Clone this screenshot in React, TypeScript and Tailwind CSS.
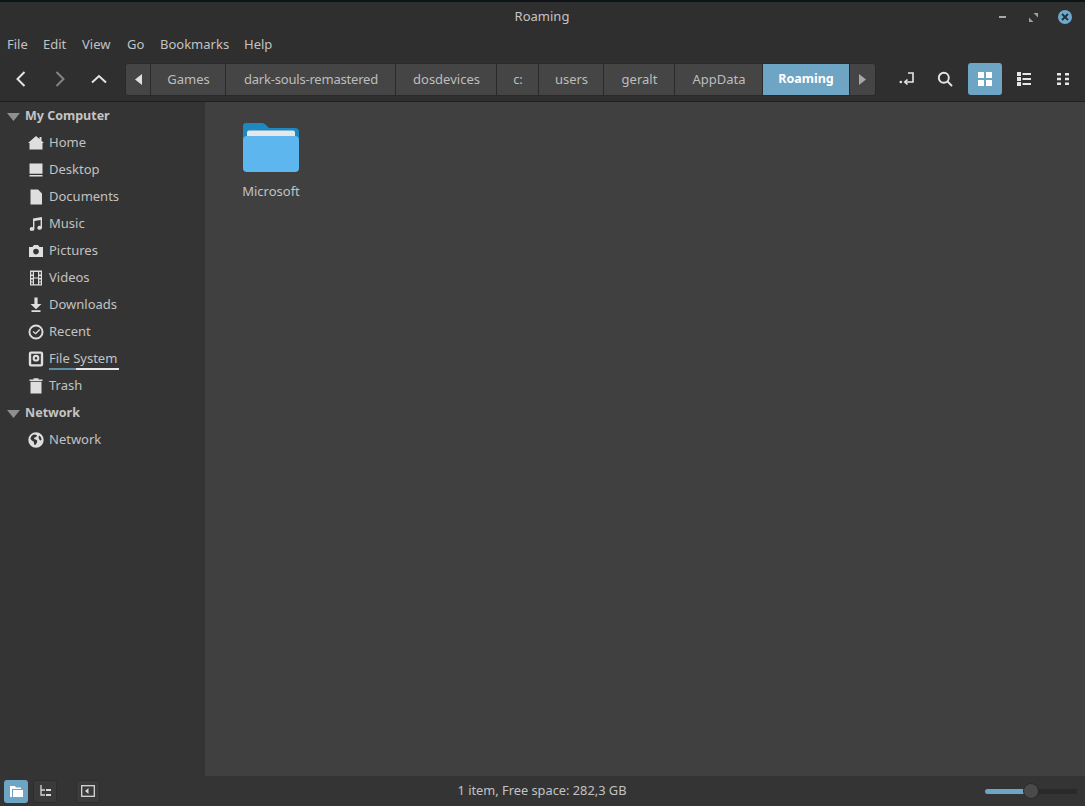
import React from 'react';

const F = "font-['Noto_Sans',sans-serif]";

const Icon: React.FC<{ children: React.ReactNode; size?: number; className?: string }> = ({ children, size = 16, className }) => (
  <svg width={size} height={size} viewBox="0 0 16 16" fill="currentColor" className={className}>
    {children}
  </svg>
);

const sidebarIcons: Record<string, React.ReactNode> = {
  Home: <path d="M8 1 11.500 4V2H13.500V5.800L16 8H14.500V14.500H1.500V8H0Z" />,
  Desktop: <path d="M1.500 1.500H14.500V11.800H1.500ZM1.500 13H14.500V14.500H1.500Z" />,
  Documents: <path d="M2.500 .5H10L14 4.500V15.500H2.500ZM10 .5V4.500H14L13.400 5.100H9.400V1Z" />,
  Music: <path d="M5 2.500 14 1V11.800A2.300 1.900 0 1 1 12.600 10V4L6.400 5V13A2.300 1.900 0 1 1 5 11.200Z" />,
  Pictures: (
    <path fillRule="evenodd" d="M1 4H4.500L6 2H10L11.500 4H15V14H1ZM8 5.800A2.800 2.800 0 1 0 8 11.400 2.800 2.800 0 0 0 8 5.800Z" />
  ),
  Videos: (
    <path fillRule="evenodd" d="M2 .5H14V15.500H2ZM3.200 2V4.500H4.800V2ZM3.200 6V8H4.800V6ZM3.200 9.500V11.500H4.800V9.500ZM3.200 12.500V14.300H4.800V12.500ZM11.200 2V4.500H12.800V2ZM11.200 6V8H12.800V6ZM11.200 9.500V11.500H12.800V9.500ZM11.200 12.500V14.300H12.800V12.500ZM6 2V7.400H10V2ZM6 8.600V14.300H10V8.600Z" />
  ),
  Downloads: <path d="M6.400 .5H9.600V7H13.500L8 12.300 2.500 7H6.400ZM3.500 13.300H12.500V15H3.500Z" />,
  Recent: (
    <path fillRule="evenodd" d="M8 .5A7.500 7.500 0 1 0 8 15.500 7.500 7.500 0 0 0 8 .5ZM8 2.400A5.600 5.600 0 1 1 8 13.600 5.600 5.600 0 0 1 8 2.400ZM11.200 5 7.600 8.700 5.400 7 4.600 8 7.700 10.600 12.200 5.900Z" />
  ),
  'File System': (
    <path fillRule="evenodd" d="M3 .5H13A2.200 2.200 0 0 1 15.200 2.700V13.300A2.200 2.200 0 0 1 13 15.500H3A2.200 2.200 0 0 1 .8 13.300V2.700A2.200 2.200 0 0 1 3 .5ZM3.200 2.800V13.200H12.800V2.800ZM8 3.800A3.400 3.400 0 1 1 8 10.600 3.400 3.400 0 0 1 8 3.800ZM8 5.900A1.300 1.300 0 1 0 8 8.500 1.300 1.300 0 0 0 8 5.900Z" />
  ),
  Trash: <path d="M5.500 .3H10.500V1.500H14.500V3H1.500V1.500H5.500ZM2.500 3.800H13.500V15.500H2.500Z" />,
  Network: (
    <path fillRule="evenodd" d="M8 .3A7.700 7.700 0 1 0 8 15.700 7.700 7.700 0 0 0 8 .3ZM5 2.800 7.400 2.400 9 3.600 8.200 5 6.400 5.400 6 7 7.600 7.400 9.200 8.600 9 10.600 7.400 13 6.200 12.400 5.800 9.800 3.800 8.600 2.400 6.800 3.200 4.400ZM11 3.400 13 5.200 13.600 8 12.400 8.400 11 7 10.600 5Z" />
  ),
};

const Place: React.FC<{ name: string; underline?: boolean }> = ({ name, underline }) => (
  <div className="flex h-[27px] items-center pl-[28px]">
    <Icon className="text-[#dedede]">{sidebarIcons[name]}</Icon>
    <span className="relative ml-[5px] text-[13px] text-[#c2c2c2]">
      {name}
      {underline && (
        <span className="absolute -bottom-[2px] left-0 flex h-[2px] w-[70px]">
          <span className="w-[27px] bg-[#5b8fa8]" />
          <span className="flex-1 bg-[#e8e8e8]" />
        </span>
      )}
    </span>
  </div>
);

const Heading: React.FC<{ name: string }> = ({ name }) => (
  <div className="flex h-[27px] items-center pl-[7px] pt-[2px]">
    <svg width="13" height="8" viewBox="0 0 13 8" className="text-[#8f8f8f]" fill="currentColor">
      <path d="M0 0H13L6.500 8Z" />
    </svg>
    <span className="ml-[5px] text-[12.5px] font-bold text-[#c4c4c4]">{name}</span>
  </div>
);

const crumbs: [string, string][] = [
  ['Games', 'w-[75px]'],
  ['dark-souls-remastered', 'w-[170px] tracking-[-0.2px]'],
  ['dosdevices', 'w-[101px]'],
  ['c:', 'w-[42px]'],
  ['users', 'w-[65px]'],
  ['geralt', 'w-[71px]'],
  ['AppData', 'w-[88px]'],
];

const StatusButton: React.FC<{ active?: boolean; children: React.ReactNode }> = ({ active, children }) => (
  <div
    className={`flex h-[23px] w-[24px] items-center justify-center rounded-[3px] ${
      active ? 'bg-[#6ea4c4] text-white' : 'border border-[#2e2e2e] bg-[#3a3a3a] text-[#d8d8d8]'
    }`}
  >
    {children}
  </div>
);

export default function App() {
  return (
    <div className={`${F} flex h-[806px] w-[1085px] flex-col overflow-hidden bg-[#2f2f2f]`}>
      {/* wallpaper sliver above the window */}
      <div className="h-[2px] bg-[#0c1418]" />

      {/* Title bar */}
      <div className="flex h-[30px] items-center">
        <div className="w-[998px] pl-[458px]">
          <div className="w-[168px] text-center text-[13px] text-[#c4c4c4]">Roaming</div>
        </div>
        <div className="flex items-center pl-[1px]">
          <div className="h-[2px] w-[7px] bg-[#a8a8a8]" />
          <svg width="9" height="9" viewBox="0 0 9 9" fill="#a0a0a0" className="ml-[23px]">
            <path d="M4.500 0H9V4.500ZM4.500 9H0V4.500Z" />
          </svg>
          <div className="ml-[20px] flex h-[14px] w-[14px] items-center justify-center rounded-full bg-[#6ea8cb]">
            <svg width="8" height="8" viewBox="0 0 8 8" stroke="#1f2f3a" strokeWidth="1.800">
              <path d="M1 1 7 7M7 1 1 7" />
            </svg>
          </div>
        </div>
      </div>

      {/* Menu bar */}
      <div className="flex h-[24px] items-center pl-[7px] pt-[2px] text-[13px] text-[#c2c2c2]">
        <span className="w-[36px]">File</span>
        <span className="w-[39px]">Edit</span>
        <span className="w-[45px]">View</span>
        <span className="w-[33px]">Go</span>
        <span className="w-[84px]">Bookmarks</span>
        <span>Help</span>
      </div>

      {/* Toolbar */}
      <div className="flex h-[46px] items-center border-b border-[#1e1e1e] pt-[1px]">
        <div className="flex w-[125px] items-center pl-[14px]">
          <svg width="14" height="16" viewBox="0 0 14 16" fill="none" stroke="#e4e4e4" strokeWidth="2">
            <path d="M10.500 1 3.500 8 10.500 15" />
          </svg>
          <svg width="14" height="16" viewBox="0 0 14 16" fill="none" stroke="#858585" strokeWidth="2" className="ml-[25px]">
            <path d="M3.500 1 10.500 8 3.500 15" />
          </svg>
          <svg width="16" height="14" viewBox="0 0 16 14" fill="none" stroke="#e4e4e4" strokeWidth="2" className="ml-[24px]">
            <path d="M1 10.500 8 4 15 10.500" />
          </svg>
        </div>

        {/* Breadcrumb path */}
        <div className="flex h-[33px] w-[751px] overflow-hidden rounded-[3px] border border-[#2a2a2a] bg-[#454545] text-[13px] text-[#bdbdbd]">
          <div className="flex w-[25px] items-center justify-center border-r border-[#2a2a2a]">
            <svg width="7" height="11" viewBox="0 0 7 11" fill="#e0e0e0">
              <path d="M7 0V11L0 5.500Z" />
            </svg>
          </div>
          {crumbs.map(([name, width]) => (
            <div key={name} className={`flex items-center justify-center border-r border-[#2a2a2a] pl-[1px] pt-[1px] ${width}`}>
              {name}
            </div>
          ))}
          <div className="flex w-[86px] items-center justify-center bg-[#6ea4c4] pt-[1px] text-[12.5px] font-bold text-white">Roaming</div>
          <div className="flex flex-1 items-center justify-center border-l border-[#2a2a2a]">
            <svg width="7" height="11" viewBox="0 0 7 11" fill="#a8a8a8">
              <path d="M0 0V11L7 5.500Z" />
            </svg>
          </div>
        </div>

        <div className="flex items-center pl-[23px]">
          <svg width="16" height="14" viewBox="0 0 16 14" fill="none" stroke="#e6e6e6" strokeWidth="1.600">
            <path d="M9 1H14V10H6" />
            <path d="M8.500 7.500 5.800 10 8.500 12.500" />
            <circle cx="1.800" cy="10" r="1.300" fill="#e6e6e6" stroke="none" />
          </svg>
          <svg width="16" height="16" viewBox="0 0 16 16" fill="none" stroke="#e6e6e6" strokeWidth="1.900" className="ml-[22px]">
            <circle cx="6.800" cy="6.800" r="5" />
            <path d="M10.400 10.400 15 15" />
          </svg>
          <div className="ml-[15px] flex h-[32px] w-[34px] items-center justify-center rounded-[3px] bg-[#6ea4c4]">
            <svg width="14" height="14" viewBox="0 0 14 14" fill="#ffffff">
              <path d="M0 0H6V6H0ZM8 0H14V6H8ZM0 8H6V14H0ZM8 8H14V14H8Z" />
            </svg>
          </div>
          <svg width="14" height="14" viewBox="0 0 14 14" fill="#e6e6e6" className="ml-[15px]">
            <path d="M0 0H4V4H0ZM5.500 1H14V3H5.500ZM0 5H4V9H0ZM5.500 6H14V8H5.500ZM0 10H4V14H0ZM5.500 11H14V13H5.500Z" />
          </svg>
          <svg width="12" height="12" viewBox="0 0 12 12" fill="#e6e6e6" className="ml-[26px]">
            <path d="M0 0H4V2.600H0ZM8 0H12V2.600H8ZM0 4.700H4V7.300H0ZM8 4.700H12V7.300H8ZM0 9.400H4V12H0ZM8 9.400H12V12H8Z" />
          </svg>
        </div>
      </div>

      {/* Body */}
      <div className="flex min-h-0 flex-1">
        <aside className="w-[205px] bg-[#343434]">
          <Heading name="My Computer" />
          {['Home', 'Desktop', 'Documents', 'Music', 'Pictures', 'Videos', 'Downloads', 'Recent'].map((name) => (
            <Place key={name} name={name} />
          ))}
          <Place name="File System" underline />
          <Place name="Trash" />
          <Heading name="Network" />
          <Place name="Network" />
        </aside>
        <main className="flex-1 bg-[#404040] pl-[33px] pt-[20px]">
          <div className="flex w-[66px] flex-col items-center">
            <svg width="58" height="52" viewBox="0 0 58 52">
              <path d="M4 1H20C22 1 23 2 24.500 3.500L27 6H53A4 4 0 0 1 57 10V30H1V4A3 3 0 0 1 4 1Z" fill="#1f88c0" />
              <path d="M5 10.500A2 2 0 0 1 7 8.500H51A2 2 0 0 1 53 10.500V20H5Z" fill="#e4e8ea" />
              <path d="M1 18A4 4 0 0 1 5 14H53A4 4 0 0 1 57 18V46A4 4 0 0 1 53 50H5A4 4 0 0 1 1 46Z" fill="#5db6ee" />
            </svg>
            <span className="mt-[8px] text-[13px] text-[#c2c2c2]">Microsoft</span>
          </div>
        </main>
      </div>

      {/* Status bar */}
      <div className="flex h-[30px] items-center bg-[#343434] pl-[4px]">
        <StatusButton active>
          <svg width="13" height="11" viewBox="0 0 13 11" fill="currentColor">
            <path d="M0 0H5L6 1.500H11V3H2V11H0ZM3 4H13V11H3Z" />
          </svg>
        </StatusButton>
        <div className="ml-[5px]">
          <StatusButton>
            <svg width="12" height="12" viewBox="0 0 12 12" fill="none" stroke="currentColor" strokeWidth="1.300">
              <path d="M2 0V10H6M2 5H6" />
              <path d="M7 5H12M7 10H12" strokeWidth="2" />
            </svg>
          </StatusButton>
        </div>
        <div className="ml-[19px]">
          <StatusButton>
            <svg width="14" height="12" viewBox="0 0 14 12" fill="none" stroke="currentColor" strokeWidth="1.300">
              <rect x=".7" y=".7" width="12.600" height="10.600" />
              <path d="M7.500 3V9L4 6Z" fill="currentColor" stroke="none" />
            </svg>
          </StatusButton>
        </div>
        <span className="ml-[352px] w-[180px] whitespace-nowrap text-center text-[12.8px] text-[#c2c2c2]">1 item, Free space: 282,3 GB</span>
        <div className="ml-[353px] flex items-center">
          <div className="h-[5px] w-[39px] rounded-l-full bg-[#6ea4c4]" />
          <div className="z-10 -mx-[1px] h-[16px] w-[16px] rounded-full border border-[#2a2a2a] bg-[#4a4a4a]" />
          <div className="h-[5px] w-[39px] bg-[#2a2a2a]" />
        </div>
      </div>
    </div>
  );
}
